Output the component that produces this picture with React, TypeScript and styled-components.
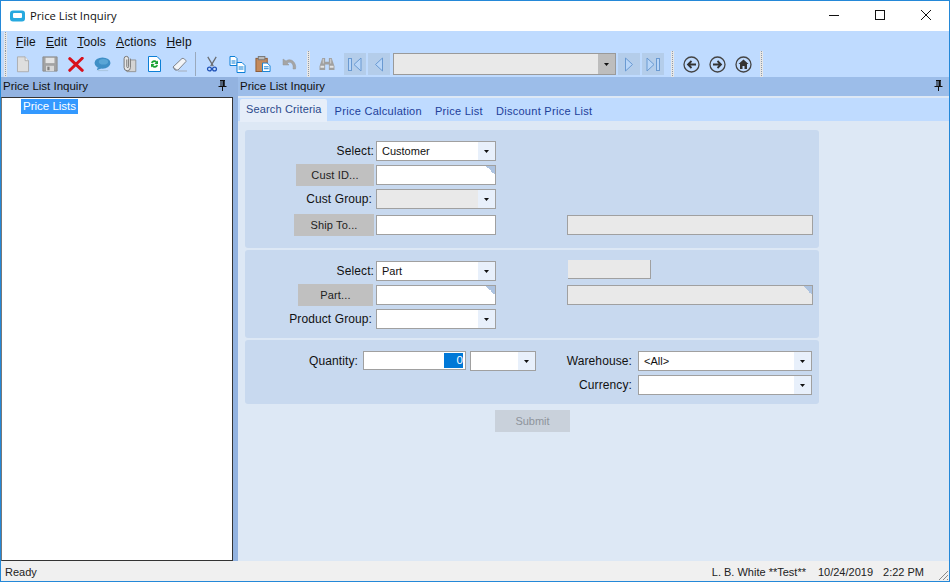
import React from "react";
import styled, { createGlobalStyle } from "styled-components";

const Global = createGlobalStyle`
  html, body { margin: 0; padding: 0; background: #fff; }
  * { box-sizing: border-box; }
`;

const Win = styled.div`
  width: 950px; height: 582px; border: 1px solid #2488d8;
  display: flex; flex-direction: column; overflow: hidden;
  font: 12px "Liberation Sans", Arial, sans-serif; color: #111; background: #bfdbff;
`;
const TitleBar = styled.div`
  height: 30px; background: #fff; display: flex; align-items: center; padding: 0 0 1px 9px; flex: none;
`;
const TitleText = styled.span`
  font: 11.25px "Open Sans", sans-serif; margin-left: 4px; color: #111; flex: 1; padding-bottom: 1px;
`;
const WinBtn = styled.div`
  width: 46px; height: 29px; display: flex; align-items: center; justify-content: center; padding-bottom: 1px;
`;
const Bars = styled.div`flex: none; background: #bfdbff;`;
const MenuBar = styled.div`height: 20px; display: flex; align-items: center; padding-left: 3px; padding-top: 1px;`;
const Grip = styled.div<{ $m?: string }>`
  width: 3px; height: 100%; flex: none; margin: ${p => p.$m ?? "0"};
  background: repeating-linear-gradient(to bottom, #8f9aa8 0 1px, #e6e6e6 1px 2px);
  border-left: 1px solid #e6e6e6; border-right: 1px solid #e6e6e6;
`;
const MenuItem = styled.span`
  margin-left: 10px; font-size: 12px; color: #111; letter-spacing: .15px;
  &:first-of-type { margin-left: 9px; }
`;
const ToolBar = styled.div`height: 26px; display: flex; align-items: center; padding-left: 3px;`;
const Slot = styled.div<{ $w?: number; $ml?: number }>`
  width: ${p => p.$w ?? 26}px; height: 26px; flex: none; display: flex; align-items: center; justify-content: center;
  margin-left: ${p => p.$ml ?? 0}px;
`;
const Sep = styled.div`width: 1px; height: 24px; background: #9aa9bc; flex: none; margin: 0 3px 0 2px;`;
const NavBtn = styled.div<{ $ml?: number }>`
  width: 22px; height: 22px; background: #b4cdea; flex: none; margin-left: ${p => p.$ml ?? 2}px;
  display: flex; align-items: center; justify-content: center;
`;
const NavCombo = styled.div`
  width: 223px; height: 22px; border: 1px solid #9a9a9a; background: #e9e9e9; flex: none; margin-left: 3px;
  display: flex; justify-content: flex-end;
`;
const NavArrow = styled.div`
  width: 17px; background: #bdbdbd; display: flex; align-items: center; justify-content: center;
`;
const Main = styled.div`flex: 1; display: flex; min-height: 0;`;
const LeftPane = styled.div`
  width: 237px; flex: none; background: #93b3e0; display: flex; flex-direction: column;
`;
const PaneHead = styled.div`
  height: 19px; flex: none; display: flex; align-items: center; justify-content: space-between;
  padding: 0 11px 2px 2px; font-size: 11.5px; color: #111;
`;
const Tree = styled.div`
  flex: 1; margin: 1px 5px 0 0; background: #fff; border: 1px solid #333; border-left-color: #777;
  padding: 1px 0 0 19px;
`;
const TreeSel = styled.span`
  display: inline-block; background: #3399ff; color: #fff; height: 15px; line-height: 15px; padding: 0 2px; font-size: 11.5px;
`;
const RightPane = styled.div`flex: 1; display: flex; flex-direction: column; background: #dde8f5; min-width: 0;`;
const RightHead = styled(PaneHead)`background: #9cbde9; padding-left: 2px; padding-right: 6px;`;
const Tabs = styled.div`
  height: 25px; flex: none; margin-top: 1px; background: #bfdbff; border-top: 1px solid #dde8f5; display: flex; padding-left: 2px; align-items: flex-end;
  border-bottom: 1px solid #dde8f5;
`;
const Tab = styled.div<{ $on?: boolean }>`
  height: ${p => (p.$on ? 23 : 20)}px; padding: 0 ${p => (p.$on ? "5px 0 6px" : "0")};
  margin-right: ${p => (p.$on ? 8 : 13)}px; margin-bottom: ${p => (p.$on ? -1 : 0)}px;
  font-size: 11px; letter-spacing: ${p => (p.$on ? ".15px" : ".28px")}; line-height: 21px;
  color: ${p => (p.$on ? "#2b4a8c" : "#21409a")};
  background: ${p => (p.$on ? "#e6eef9" : "transparent")};
  border-radius: ${p => (p.$on ? "2px 2px 0 0" : "0")};
`;
const Content = styled.div`flex: 1; padding: 8px 0 0 7px;`;
const Form = styled.div`width: 574px; display: flex; flex-direction: column; gap: 2px;`;
const Panel = styled.div<{ $h: number; $rows: string }>`
  height: ${p => p.$h}px; background: #c8d9ef; border-radius: 3px; padding-top: 11px;
  display: grid; grid-template-columns: 131px 120px 71px 246px;
  grid-template-rows: ${p => p.$rows}; align-items: start;
`;
const QtyPanel = styled.div`
  height: 64px; background: #c8d9ef; border-radius: 3px; padding-top: 11px; display: flex; align-items: flex-start;
`;
const Label = styled.div<{ $w?: number; $mr?: number }>`
  height: 20px; line-height: 20px; text-align: right; font-size: 12px; color: #111; letter-spacing: .1px;
  width: ${p => (p.$w ? `${p.$w}px` : "auto")}; margin-right: ${p => p.$mr ?? 2}px; flex: none;
`;
const LookupBtn = styled.div<{ $w: number; $mr: number }>`
  width: ${p => p.$w}px; height: 22px; margin-top: -1px; justify-self: end; margin-right: ${p => p.$mr}px;
  background: #c0c0c0; text-align: center; line-height: 22px; font-size: 11px; color: #222; letter-spacing: .15px;
`;
const Field = styled.div<{ $w?: number; $off?: boolean; $note?: boolean; $ml?: number; $h?: number }>`
  position: relative; height: ${p => p.$h ?? 20}px; width: ${p => (p.$w ? `${p.$w}px` : "auto")}; flex: none;
  margin-left: ${p => p.$ml ?? 0}px;
  background: ${p => (p.$off ? "#e9e9e9" : "#fff")}; border: 1px solid #a0a0a0;
  ${p => p.$note ? `&::after { content: ""; position: absolute; top: 0; right: 0; width: 9px; height: 9px;
    background: linear-gradient(45deg, transparent 50%, #adc3e0 50%); }` : ""}
`;
const RaisedField = styled.div`
  width: 83px; height: 19px; margin: -1px 0 0 1px; background: #e9e9e9;
  border-right: 1px solid #a0a0a0; border-bottom: 1px solid #a0a0a0;
`;
const Combo = styled.div<{ $w?: number; $off?: boolean; $ml?: number }>`
  height: 20px; width: ${p => (p.$w ? `${p.$w}px` : "auto")}; flex: none; margin-left: ${p => p.$ml ?? 0}px;
  border: 1px solid #a0a0a0; background: ${p => (p.$off ? "#e9e9e9" : "#fff")};
  display: flex; font-size: 11px; color: #111; line-height: 18px;
`;
const ComboText = styled.div`flex: 1; padding-left: 5px;`;
const ComboArrow = styled.div`
  width: 17px; background: #e8f0fb; display: flex; align-items: center; justify-content: center;
`;
const NumText = styled.div`
  height: 100%; display: flex; justify-content: flex-end; padding-right: 2px; padding-top: 1px;
`;
const NumSel = styled.span`
  background: #0078d7; color: #fff; height: 15px; width: 19px; font-size: 11.5px; line-height: 14px; text-align: right;
`;
const RightCol = styled.div`
  display: grid; grid-template-columns: 66px 174px; column-gap: 6px; row-gap: 4px; margin-left: 30px;
`;
const SubmitRow = styled.div`display: flex; justify-content: center; padding-top: 4px;`;
const Submit = styled.div`
  width: 75px; height: 22px; background: #c9d1db; color: #8e949c; text-align: center; line-height: 22px; font-size: 11px; margin-left: 1px;
`;
const Status = styled.div`
  height: 20px; flex: none; background: #f0f0f0; display: flex; align-items: center; padding: 2px 0 0 4px; font-size: 11px; color: #222; position: relative;
`;
const StatusCell = styled.span<{ $ml?: number }>`margin-left: ${p => p.$ml ?? 0}px;`;
const ResizeGrip = styled.svg`position: absolute; right: 0; bottom: 0;`;

const Caret = () => (
  <svg width="5" height="3" viewBox="0 0 5 3"><path d="M0 0h5L2.500 3z" fill="#111" /></svg>
);
const Pin = () => (
  <svg width="9" height="11" viewBox="0 0 9 11">
    <path d="M2 0.500h5M3 .5v5.500M6 .5v5.500" stroke="#111" fill="none" />
    <path d="M5 1h1v5H5zM.5 6.500h8M4.500 7v4" stroke="#111" fill="#111" />
  </svg>
);
const Doc = () => (
  <svg width="14" height="17" viewBox="0 0 16 20"><path d="M1.500 1h9l4 4.500v13h-13z" fill="#dedede" stroke="#a8a8a8" /><path d="M10.500 1v4.500h4" fill="#f0f0f0" stroke="#a8a8a8" /></svg>
);
const Save = () => (
  <svg width="16" height="16" viewBox="0 0 18 18"><path d="M1 1h16v16H1z" fill="#a3a3a3" stroke="#8a8a8a" /><rect x="4" y="2" width="10" height="6" fill="#e4e4e4" /><rect x="4.500" y="11" width="9" height="6" fill="#d8d8d8" /><rect x="6" y="12" width="2.500" height="4" fill="#808080" /></svg>
);
const Del = () => (
  <svg width="16" height="15" viewBox="0 0 18 16"><path d="M2 1.500L16 14.500M16 1L2 14.500" stroke="#d8101c" strokeWidth="3.400" strokeLinecap="round" /></svg>
);
const Bubble = () => (
  <svg width="17" height="15" viewBox="0 0 18 16"><ellipse cx="9" cy="6.500" rx="8.500" ry="6" fill="#3f8fc6" /><ellipse cx="10" cy="5" rx="5" ry="3" fill="#5aa6d6" /><path d="M4 11l-1 3 5-2z" fill="#3f8fc6" /><path d="M4 14.500h11" stroke="#a9c4de" strokeWidth="1" /></svg>
);
const Clip = () => (
  <svg width="15" height="18" viewBox="0 0 16 20">
    <path d="M5 5.500h10v13H5z" fill="#d4d4d4" stroke="#8e8e8e" />
    <path d="M9 4v10a3.500 3.500 0 0 1-7 0V4a2.500 2.500 0 0 1 5 0v9a1 1 0 0 1-2 0V5" fill="#e6e6e6" stroke="#777" strokeWidth="1.100" />
  </svg>
);
const Refresh = () => (
  <svg width="13" height="16" viewBox="0 0 13 16"><path d="M.5.500h8.500l3.500 3.500v11.500H.5z" fill="#fff" stroke="#0d7fd6" /><path d="M3 6.500a3.500 3.500 0 0 1 6-1l1-1v3.500H6.500l1.200-1.200a2 2 0 0 0-3.400.7z" fill="#19a332" /><path d="M10 9.500a3.500 3.500 0 0 1-6 1l-1 1V8h3.500L5.300 9.200a2 2 0 0 0 3.400-.7z" fill="#19a332" /></svg>
);
const Eraser = () => (
  <svg width="16" height="15" viewBox="0 0 16 15"><path d="M1 10L10 1.500c1-.9 4.500 1.500 4 3L6 13H3z" fill="#f2f4f7" stroke="#7f848d" /><path d="M1 10l3.500 3" stroke="#7f848d" /><path d="M6 14h9" stroke="#a5adba" /></svg>
);
const Scissors = () => (
  <svg width="12" height="16" viewBox="0 0 12 19"><path d="M1 1l6.500 11M11 1L4.500 12" stroke="#6a6d72" strokeWidth="1.500" /><circle cx="3" cy="15.500" r="2.300" fill="none" stroke="#1f52b8" strokeWidth="1.500" /><circle cx="9" cy="15.500" r="2.300" fill="none" stroke="#1f52b8" strokeWidth="1.500" /></svg>
);
const Copy = () => (
  <svg width="17" height="17" viewBox="0 0 16 17">
    <path d="M.5.500h5l2 2v7h-7z" fill="#fff" stroke="#0d7fd6" /><path d="M2 5h4M2 7h4" stroke="#0d7fd6" />
    <path d="M7.500 6.500h5l3 3v7h-8z" fill="#fff" stroke="#0d7fd6" /><path d="M9 11h5M9 13h5" stroke="#0d7fd6" />
  </svg>
);
const Paste = () => (
  <svg width="16" height="16" viewBox="0 0 16 17">
    <rect x=".5" y="2.500" width="12" height="14" fill="#c48a5c" stroke="#8c5a35" /><rect x="3" y=".5" width="7" height="3.500" fill="#bbb" stroke="#777" />
    <path d="M7.500 7.500h5l3 3v6h-8z" fill="#fff" stroke="#0d7fd6" /><path d="M9 11.500h5M9 13.500h5" stroke="#0d7fd6" />
  </svg>
);
const Undo = () => (
  <svg width="15" height="13" viewBox="0 0 15 13"><path d="M1 1v6h6L5 5c3-2 7 0 6 6h2.500C15 5 9-1 4 3z" fill="#a5a5a5" stroke="#949494" strokeWidth=".5" /></svg>
);
const Binoc = () => (
  <svg width="16" height="14" viewBox="0 0 16 15"><path d="M3 1h3v4h4V1h3l3 9v4H10V8H6v6H0v-4z" fill="#a0a0a0" /><path d="M1 10.500h4M11 10.500h4" stroke="#e4e4e4" strokeWidth="2" /><path d="M4 2v5M12 2v5" stroke="#d8d8d8" /></svg>
);
const NavIcon = ({ dir, bar }: { dir: "l" | "r"; bar?: boolean }) => (
  <svg width="16" height="15" viewBox="0 0 16 15">
    <g transform={dir === "r" ? "translate(16 0) scale(-1 1)" : ""} fill="#b9d6f8" stroke="#6a9ad2">
      {bar && <rect x="1.500" y="1.500" width="3" height="12" />}
      <path d={bar ? "M14 1v13L7 7.500z" : "M11.500 1v13L4.500 7.500z"} />
    </g>
  </svg>
);
const RoundNav = ({ kind }: { kind: "b" | "f" | "h" }) => (
  <svg width="17" height="17" viewBox="0 0 17 17">
    <circle cx="8.500" cy="8.500" r="7.500" fill="none" stroke="#444" strokeWidth="1.300" />
    {kind === "b" && <path d="M13 8.500H5M8.500 5L5 8.500 8.500 12" fill="none" stroke="#333" strokeWidth="1.800" />}
    {kind === "f" && <path d="M4 8.500h8M8.500 5L12 8.500 8.500 12" fill="none" stroke="#333" strokeWidth="1.800" />}
    {kind === "h" && <path d="M8.500 3.500L13.500 8H12v5H9.500v-3h-2v3H5V8H3.500z" fill="#333" />}
  </svg>
);
const AppIcon = () => (
  <svg width="16" height="12" viewBox="0 0 16 12"><rect width="15" height="11" y=".5" rx="3" fill="#27a9df" /><rect x="3" y="3" width="9" height="5" rx="1" fill="#fff" /></svg>
);

export default function App() {
  return (
    <Win>
      <Global />
      <TitleBar>
        <AppIcon />
        <TitleText>Price List Inquiry</TitleText>
        <WinBtn><svg width="10" height="10" viewBox="0 0 10 10"><path d="M0 5.500h10" stroke="#111" /></svg></WinBtn>
        <WinBtn><svg width="10" height="10" viewBox="0 0 10 10"><rect x=".5" y=".5" width="9" height="9" fill="none" stroke="#111" /></svg></WinBtn>
        <WinBtn><svg width="10" height="10" viewBox="0 0 10 10"><path d="M0 0l10 10M10 0L0 10" stroke="#111" /></svg></WinBtn>
      </TitleBar>
      <Bars>
        <MenuBar>
          <Grip />
          <MenuItem><u>F</u>ile</MenuItem>
          <MenuItem><u>E</u>dit</MenuItem>
          <MenuItem><u>T</u>ools</MenuItem>
          <MenuItem><u>A</u>ctions</MenuItem>
          <MenuItem><u>H</u>elp</MenuItem>
        </MenuBar>
        <ToolBar>
          <Grip $m="0 3px 0 0" />
          <Slot><Doc /></Slot>
          <Slot $w={27}><Save /></Slot>
          <Slot $w={25}><Del /></Slot>
          <Slot $w={28}><Bubble /></Slot>
          <Slot><Clip /></Slot>
          <Slot $w={25}><Refresh /></Slot>
          <Slot><Eraser /></Slot>
          <Sep />
          <Slot $w={25}><Scissors /></Slot>
          <Slot $w={27}><Copy /></Slot>
          <Slot $w={24}><Paste /></Slot>
          <Slot $w={28}><Undo /></Slot>
          <Grip $m="0 4px 0 4px" />
          <Slot $w={26}><Binoc /></Slot>
          <NavBtn $ml={4}><NavIcon dir="l" bar /></NavBtn>
          <NavBtn><NavIcon dir="l" /></NavBtn>
          <NavCombo><NavArrow><Caret /></NavArrow></NavCombo>
          <NavBtn $ml={2}><NavIcon dir="r" /></NavBtn>
          <NavBtn><NavIcon dir="r" bar /></NavBtn>
          <Grip $m="0 0 0 7px" />
          <Slot $w={26} $ml={4}><RoundNav kind="b" /></Slot>
          <Slot $w={26}><RoundNav kind="f" /></Slot>
          <Slot $w={26}><RoundNav kind="h" /></Slot>
          <Grip $m="0 0 0 4px" />
        </ToolBar>
      </Bars>
      <Main>
        <LeftPane>
          <PaneHead>Price List Inquiry<Pin /></PaneHead>
          <Tree><TreeSel>Price Lists</TreeSel></Tree>
        </LeftPane>
        <RightPane>
          <RightHead>Price List Inquiry<Pin /></RightHead>
          <Tabs>
            <Tab $on>Search Criteria</Tab>
            <Tab>Price Calculation</Tab>
            <Tab>Price List</Tab>
            <Tab>Discount Price List</Tab>
          </Tabs>
          <Content>
            <Form>
              <Panel $h={118} $rows="24px 24px 26px 20px">
                <Label>Select:</Label>
                <Combo><ComboText>Customer</ComboText><ComboArrow><Caret /></ComboArrow></Combo>
                <span /><span />
                <LookupBtn $w={78} $mr={2}>Cust ID...</LookupBtn>
                <Field $note />
                <span /><span />
                <Label $mr={4}>Cust Group:</Label>
                <Combo $off><ComboText /><ComboArrow><Caret /></ComboArrow></Combo>
                <span /><span />
                <LookupBtn $w={80} $mr={2}>Ship To...</LookupBtn>
                <Field />
                <span />
                <Field $off />
              </Panel>
              <Panel $h={88} $rows="24px 24px 20px">
                <Label>Select:</Label>
                <Combo><ComboText>Part</ComboText><ComboArrow><Caret /></ComboArrow></Combo>
                <span />
                <RaisedField />
                <LookupBtn $w={75} $mr={3}>Part...</LookupBtn>
                <Field $note />
                <span />
                <Field $off $note />
                <Label $mr={4}>Product Group:</Label>
                <Combo><ComboText /><ComboArrow><Caret /></ComboArrow></Combo>
              </Panel>
              <QtyPanel>
                <Label $w={113} $mr={5}>Quantity:</Label>
                <Field $w={103} $h={19}><NumText><NumSel>0</NumSel></NumText></Field>
                <Combo $w={66} $ml={4}><ComboText /><ComboArrow><Caret /></ComboArrow></Combo>
                <RightCol>
                  <Label $mr={0}>Warehouse:</Label>
                  <Combo><ComboText>&lt;All&gt;</ComboText><ComboArrow><Caret /></ComboArrow></Combo>
                  <Label $mr={0}>Currency:</Label>
                  <Combo><ComboText /><ComboArrow><Caret /></ComboArrow></Combo>
                </RightCol>
              </QtyPanel>
              <SubmitRow><Submit>Submit</Submit></SubmitRow>
            </Form>
          </Content>
        </RightPane>
      </Main>
      <Status>
        <StatusCell>Ready</StatusCell>
        <StatusCell $ml={675}>L. B. White **Test**</StatusCell>
        <StatusCell $ml={12}>10/24/2019</StatusCell>
        <StatusCell $ml={10}>2:22 PM</StatusCell>
        <ResizeGrip width="12" height="12" viewBox="0 0 12 12">
          <path d="M11 2L2 11M11 6L6 11M11 10L10 11" stroke="#8a8a8a" />
        </ResizeGrip>
      </Status>
    </Win>
  );
}
